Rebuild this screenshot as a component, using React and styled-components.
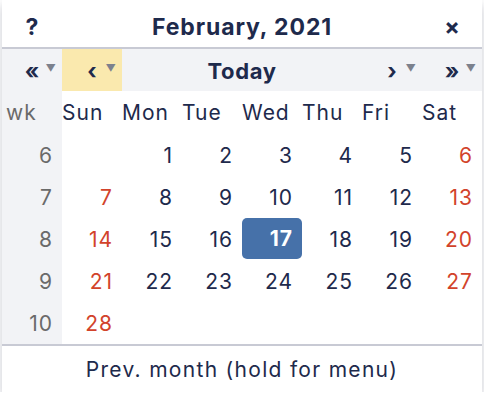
import React from 'react';
import styled, { createGlobalStyle } from 'styled-components';

const GlobalStyle = createGlobalStyle`
    body {
        margin: 0;
        background: #ffffff;
        font-family: Inter, "Liberation Sans", sans-serif;
    }
`

const Page = styled.div`
    padding: 0 2px;
`

const Popup = styled.div`
    width: 480px;
    background: #ffffff;
    color: #1e2a4c;
    box-shadow: 0 5px 10px rgba(40, 45, 70, 0.25);
`

const Grid = styled.div`
    display: grid;
    grid-template-columns: repeat(8, 60px);
`

const Header = styled(Grid)`
    box-sizing: border-box;
    height: 49px;
    padding-top: 7px;
    align-items: center;
    border-bottom: 2px solid #c8cad4;
    font-weight: 700;
    font-size: 23px;
`

const HeaderCell = styled.div`
    grid-column: span ${p => p.span || 1};
    text-align: center;
    letter-spacing: ${p => p.span ? 0.9 : 0}px;
`

const NavRow = styled(Grid)`
    height: 42px;
    background: #f2f3f6;
`

const NavCell = styled.div`
    position: relative;
    grid-column: span ${p => p.span || 1};
    display: flex;
    align-items: center;
    justify-content: center;
    padding-top: 1px;
    font-weight: 700;
    font-size: 22px;
    letter-spacing: ${p => p.span ? 0.6 : 0}px;
    background: ${p => p.active ? '#fae9ae' : 'transparent'};
`

const Drop = styled.span`
    position: absolute;
    right: 6px;
    top: 13px;
    font-size: 10px;
    color: #7c818d;
`

const DayName = styled.div`
    height: 43px;
    display: flex;
    align-items: center;
    font-size: 21px;
    letter-spacing: 1px;
    padding-left: ${p => p.wk ? 4 : 0}px;
    color: ${p => p.wk ? '#6a6a6a' : '#1e2a4c'};
    background: ${p => p.wk ? '#f2f3f6' : 'transparent'};
`

const Cell = styled.div`
    height: 42px;
    display: flex;
    align-items: center;
    justify-content: flex-end;
    padding-right: 9px;
    font-size: 21px;
    letter-spacing: 1px;
    color: ${p => p.wk ? '#6a6a6a' : p.weekend ? '#d2432b' : '#1e2a4c'};
    background: ${p => p.wk ? '#f2f3f6' : p.today ? '#4671a9' : 'transparent'};
    ${p => p.today && `
        color: #ffffff;
        font-weight: 700;
        border-radius: 5px;
        height: 41px;
    `}
`

const Footer = styled.div`
    border-top: 2px solid #c8cad4;
    height: 46px;
    display: flex;
    align-items: center;
    justify-content: center;
    font-size: 21px;
    letter-spacing: 1.3px;
`

const dayNames = ['Sun', 'Mon', 'Tue', 'Wed', 'Thu', 'Fri', 'Sat'];

const weeks = [
    [6, [null, 1, 2, 3, 4, 5, 6]],
    [7, [7, 8, 9, 10, 11, 12, 13]],
    [8, [14, 15, 16, 17, 18, 19, 20]],
    [9, [21, 22, 23, 24, 25, 26, 27]],
    [10, [28, null, null, null, null, null, null]],
];

export default function App() {
    return (
        <Page>
            <GlobalStyle />
            <Popup>
                <Header>
                    <HeaderCell>?</HeaderCell>
                    <HeaderCell span={6}>February, 2021</HeaderCell>
                    <HeaderCell>×</HeaderCell>
                </Header>
                <NavRow>
                    <NavCell>«<Drop>▼</Drop></NavCell>
                    <NavCell active>‹<Drop>▼</Drop></NavCell>
                    <NavCell span={4}>Today</NavCell>
                    <NavCell>›<Drop>▼</Drop></NavCell>
                    <NavCell>»<Drop>▼</Drop></NavCell>
                </NavRow>
                <Grid>
                    <DayName wk>wk</DayName>
                    {dayNames.map(d => <DayName key={d}>{d}</DayName>)}
                    {weeks.map(([wk, days]) => (
                        <React.Fragment key={wk}>
                            <Cell wk>{wk}</Cell>
                            {days.map((d, i) => (
                                <Cell key={i} weekend={i === 0 || i === 6} today={d === 17}>{d}</Cell>
                            ))}
                        </React.Fragment>
                    ))}
                </Grid>
                <Footer>Prev. month (hold for menu)</Footer>
            </Popup>
        </Page>
    );
}
